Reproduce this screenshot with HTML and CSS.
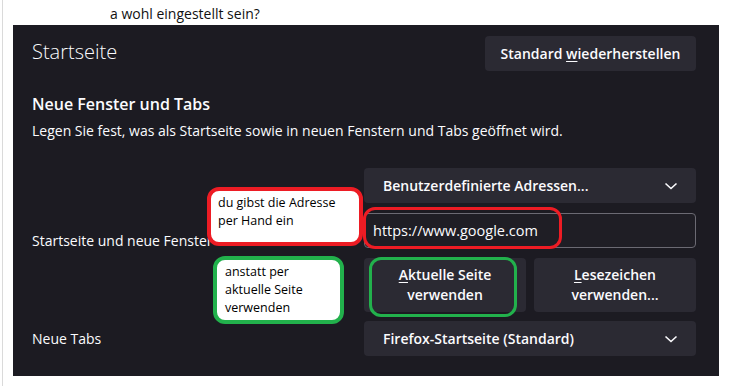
FILE: index.html
```html
<!DOCTYPE html>
<html lang="de">
<head>
<meta charset="utf-8">
<title>Startseite</title>
<link rel="stylesheet" href="styles.css">
</head>
<body>
<div class="frame">
  <div class="topline"><span class="cut">a wohl eingestellt sein?</span></div>
  <section class="panel">
    <header class="head">
      <h1 class="title">Startseite</h1>
      <button class="btn restore">Standard <u>w</u>iederherstellen</button>
    </header>
    <h2 class="subtitle">Neue Fenster und Tabs</h2>
    <p class="desc">Legen Sie fest, was als Startseite sowie in neuen Fenstern und Tabs geöffnet wird.</p>
    <div class="row">
      <div class="label">Startseite und neue Fenster</div>
      <div class="controls">
        <div class="select">
          <span>Benutzerdefinierte Adressen...</span>
          <svg class="chev" width="14" height="8" viewBox="0 0 14 8"><path d="M1.5 1.5 L7 6.5 L12.5 1.5" fill="none" stroke="#fbfbfe" stroke-width="1.6"/></svg>
        </div>
        <div class="input">https://www.google.com</div>
        <div class="pair">
          <button class="btn two"><u>A</u>ktuelle Seite<br>verwenden</button>
          <button class="btn two"><u>L</u>esezeichen<br>verwenden...</button>
        </div>
      </div>
    </div>
    <div class="row row2">
      <div class="label">Neue Tabs</div>
      <div class="controls">
        <div class="select">
          <span>Firefox-Startseite (Standard)</span>
          <svg class="chev" width="14" height="8" viewBox="0 0 14 8"><path d="M1.5 1.5 L7 6.5 L12.5 1.5" fill="none" stroke="#fbfbfe" stroke-width="1.6"/></svg>
        </div>
      </div>
    </div>

    <div class="note red-note">du gibst die Adresse<br>per Hand ein</div>
    <div class="ring red-url"></div>
    <div class="note green-note">anstatt per<br>aktuelle Seite<br>verwenden</div>
    <div class="ring green-btn"></div>
  </section>
</div>
</body>
</html>
```

FILE: styles.css
```css
* { box-sizing: border-box; }
html, body { margin: 0; padding: 0; background: #fff; }
body { padding-left: 2px; font-family: "Open Sans", "Noto Sans", sans-serif; }
.frame {
  border-left: 1px solid #dadada;
  height: 386px;
  padding-left: 10px;
}
.topline {
  height: 25px;
  font-size: 14px;
  line-height: 27px;
  color: #111;
  padding-left: 97px;
  overflow: hidden;
}
.cut { display: inline-block; }
.panel {
  position: relative;
  width: 706px;
  height: 351px;
  background: #1c1b22;
  color: #fbfbfe;
  padding: 11px 23px 0 19px;
}
.head {
  display: flex;
  justify-content: space-between;
  align-items: center;
  height: 35px;
}
.title {
  margin: 0;
  font-size: 20px;
  font-weight: 300;
  line-height: 24px;
  margin-top: -4px;
}
.btn {
  font-family: inherit;
  background: #2b2a33;
  color: #fbfbfe;
  border: none;
  border-radius: 4px;
  font-size: 14px;
  font-weight: 600;
  cursor: pointer;
}
.btn u { text-underline-offset: 2px; }
.restore {
  width: 211px;
  height: 35px;
  padding: 0;
}
.subtitle {
  margin: 22px 0 0;
  font-size: 16px;
  font-weight: 600;
  line-height: 22px;
}
.desc {
  margin: 6px 0 0;
  font-size: 14px;
  line-height: 20px;
}
.row {
  display: flex;
  align-items: center;
  margin-top: 27px;
}
.row2 { margin-top: 9px; }
.label {
  flex: 1;
  font-size: 14px;
}
.controls {
  width: 332px;
  display: flex;
  flex-direction: column;
  gap: 10px;
}
.select {
  height: 35px;
  background: #2b2a33;
  border-radius: 4px;
  display: flex;
  align-items: center;
  justify-content: space-between;
  padding: 0 18px 0 19px;
  font-size: 14px;
  font-weight: 600;
}
.chev { display: block; }
.input {
  height: 35px;
  border: 1px solid #6b6a73;
  border-radius: 4px;
  background: #1f1e25;
  display: flex;
  align-items: center;
  padding-left: 8px;
  font-size: 14.5px;
}
.pair {
  display: flex;
  gap: 8px;
}
.two {
  flex: 1;
  height: 54px;
  line-height: 20px;
  padding: 0;
}
.note {
  position: absolute;
  background: #fff;
  color: #000;
  font-size: 12.5px;
  line-height: 18px;
  font-family: "Open Sans", "Noto Sans", sans-serif;
}
.red-note {
  left: 194px; top: 162px; width: 156px; height: 59px;
  border: 4px solid #ed1c24;
  border-radius: 12px;
  padding: 3px 0 0 7px;
}
.green-note {
  left: 200px; top: 231px; width: 131px; height: 68px;
  border: 4px solid #22b14c;
  border-radius: 12px;
  padding: 3px 0 0 8px;
}
.ring {
  position: absolute;
  border-radius: 12px;
}
.red-url {
  left: 350px; top: 182px; width: 199px; height: 42px;
  border: 3px solid #ed1c24;
}
.green-btn {
  left: 356px; top: 232px; width: 148px; height: 60px;
  border: 3px solid #22b14c;
}
```
